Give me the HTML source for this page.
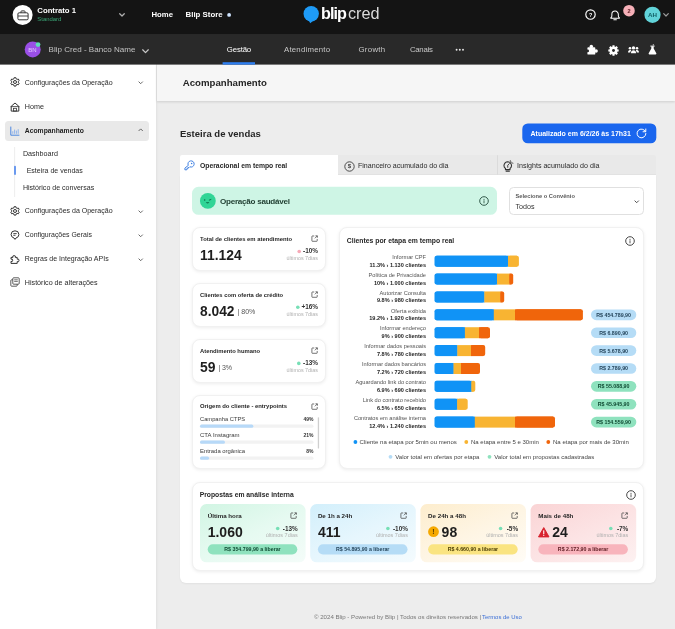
<!DOCTYPE html>
<html lang="pt-BR"><head><meta charset="utf-8"><title>Blip Cred - Esteira de vendas</title>
<style>
*{box-sizing:border-box;margin:0;padding:0}
html,body{width:675px;height:629px;overflow:hidden;background:#ededed}
body{font-family:"Liberation Sans",sans-serif;-webkit-font-smoothing:antialiased}
#root{will-change:transform;position:relative;width:675px;height:629px;overflow:hidden;background:#ededed}
.b{position:absolute}
.t{position:absolute;white-space:nowrap;line-height:1}
svg{position:absolute;overflow:visible}

</style></head>
<body>
<div id="root">
<div class="b" style="left:0px;top:0px;width:675px;height:34px;background:#141414"></div>
<div class="b" style="left:0px;top:34px;width:675px;height:30px;background:#292929"></div>
<div class="b" style="left:0px;top:64px;width:156.2px;height:565px;background:#fff;box-shadow:1px 0 2px rgba(0,0,0,.055)"></div>
<div class="b" style="left:4.5px;top:121px;width:144.5px;height:19.5px;background:#e9e9e9;border-radius:3.500px"></div>
<div class="b" style="left:157px;top:64px;width:518px;height:36.5px;background:#f6f6f6;box-shadow:0 1px 2.5px rgba(0,0,0,.13)"></div>
<div class="b" style="left:180px;top:155px;width:476px;height:20px;background:#e9e9e9;border-radius:2px 2px 0 0;border-bottom:0.8px solid #e2e2e2"></div>
<div class="b" style="left:180px;top:155.4px;width:157.7px;height:20px;background:#fff;border-radius:2px 0 0 0"></div>
<div class="b" style="left:180px;top:174.5px;width:476px;height:408.5px;background:#fff;border-radius:0 0 6px 6px;box-shadow:0 1px 2px rgba(0,0,0,.05)"></div>
<div class="b" style="left:509.2px;top:187.2px;width:135px;height:27.4px;background:#fff;border:0.8px solid #e0e0e0;border-radius:4.5px"></div>
<div class="b" style="left:192px;top:227px;width:134px;height:43.5px;background:#fff;border:0.8px solid #f1f1f1;border-radius:8px;box-shadow:0 1px 3.5px rgba(0,0,0,.075)"></div>
<div class="b" style="left:192px;top:283px;width:134px;height:43.5px;background:#fff;border:0.8px solid #f1f1f1;border-radius:8px;box-shadow:0 1px 3.5px rgba(0,0,0,.075)"></div>
<div class="b" style="left:192px;top:339px;width:134px;height:43.5px;background:#fff;border:0.8px solid #f1f1f1;border-radius:8px;box-shadow:0 1px 3.5px rgba(0,0,0,.075)"></div>
<div class="b" style="left:192px;top:394.5px;width:134px;height:74.5px;background:#fff;border:0.8px solid #f1f1f1;border-radius:8px;box-shadow:0 1px 3.5px rgba(0,0,0,.075)"></div>
<div class="b" style="left:339px;top:227px;width:304.5px;height:242px;background:#fff;border:0.8px solid #f1f1f1;border-radius:8px;box-shadow:0 1px 3.5px rgba(0,0,0,.075)"></div>
<div class="b" style="left:192px;top:481.5px;width:451.5px;height:89px;background:#fff;border:0.8px solid #f1f1f1;border-radius:8px;box-shadow:0 1px 3.5px rgba(0,0,0,.075)"></div>
<svg style="left:0;top:0" width="675" height="629" viewBox="0 0 675 629">
<rect x="0" y="34.2" width="675" height="30.4" fill="#292929"/>
<circle cx="22.6" cy="14.9" r="10" fill="#fff"/>
<circle cx="229.1" cy="14.9" r="1.9" fill="#cfe4ff"/>
<circle cx="629" cy="10.7" r="5.8" fill="#f6b0b8"/>
<circle cx="652.5" cy="14.8" r="8.1" fill="#61d3d9"/>
<circle cx="32.7" cy="49.4" r="8" fill="#9a4fe6"/>
<circle cx="38" cy="44.6" r="2.4" fill="#5fdcb8"/>
<rect x="222.6" y="62.2" width="32.4" height="2.4" fill="#2d7ef0"/>
<circle cx="456.6" cy="49.8" r="0.95" fill="#e8e8e8"/>
<circle cx="459.8" cy="49.8" r="0.95" fill="#e8e8e8"/>
<circle cx="463" cy="49.8" r="0.95" fill="#e8e8e8"/>
<rect x="14.3" y="147" width="0.8" height="50" fill="#e9e9e9"/>
<rect x="14.1" y="165.8" width="1.8" height="9.2" rx="0.9" fill="#5b8fee"/>
<rect x="522.3" y="123.5" width="134" height="19.8" rx="5.5" fill="#1a66ee"/>
<rect x="497" y="155.2" width="0.8" height="19.3" fill="#d8d8d8"/>
<rect x="192" y="186.8" width="305" height="28" rx="6.5" fill="#cef5e5"/>
<circle cx="207.85" cy="200.9" r="7.9" fill="#31d596"/>
<circle cx="299.2" cy="251.5" r="1.8" fill="#f7a9b7"/>
<circle cx="297.8" cy="307.2" r="1.8" fill="#77dfb6"/>
<circle cx="298.8" cy="363.4" r="1.8" fill="#77dfb6"/>
<rect x="200" y="424.5" width="113.5" height="3.3" rx="1.65" fill="#f2f2f2"/>
<rect x="200" y="424.5" width="53.34" height="3.3" rx="1.65" fill="#b7d9f8"/>
<rect x="200" y="440.5" width="113.5" height="3.3" rx="1.65" fill="#f2f2f2"/>
<rect x="200" y="440.5" width="24.97" height="3.3" rx="1.65" fill="#b7d9f8"/>
<rect x="200" y="456.5" width="113.5" height="3.3" rx="1.65" fill="#f2f2f2"/>
<rect x="200" y="456.5" width="9.08" height="3.3" rx="1.65" fill="#b7d9f8"/>
<rect x="317.8" y="417.2" width="1.3" height="31.4" rx="0.65" fill="#cfcfcf"/>
<rect x="434.5" y="255.7" width="73.5" height="11" rx="2" fill="#1093f6"/>
<rect x="436.5" y="255.7" width="71.8" height="11" fill="#1093f6"/>
<rect x="508" y="255.7" width="10.9" height="11" rx="2" fill="#f8b432"/>
<rect x="508" y="255.7" width="8.9" height="11" fill="#f8b432"/>
<rect x="434.5" y="273.58" width="62.5" height="11" rx="2" fill="#1093f6"/>
<rect x="436.5" y="273.58" width="60.8" height="11" fill="#1093f6"/>
<rect x="497" y="273.58" width="12.7" height="11" fill="#f8b432"/>
<rect x="509.4" y="273.58" width="3.8" height="11" rx="2" fill="#f0650b"/>
<rect x="509.4" y="273.58" width="1.8" height="11" fill="#f0650b"/>
<rect x="434.5" y="291.46" width="49.8" height="11" rx="2" fill="#1093f6"/>
<rect x="436.5" y="291.46" width="48.1" height="11" fill="#1093f6"/>
<rect x="484.3" y="291.46" width="16.4" height="11" fill="#f8b432"/>
<rect x="500.4" y="291.46" width="3.8" height="11" rx="2" fill="#f0650b"/>
<rect x="500.4" y="291.46" width="1.8" height="11" fill="#f0650b"/>
<rect x="434.5" y="309.34" width="59.3" height="11" rx="2" fill="#1093f6"/>
<rect x="436.5" y="309.34" width="57.6" height="11" fill="#1093f6"/>
<rect x="493.8" y="309.34" width="21.5" height="11" fill="#f8b432"/>
<rect x="515" y="309.34" width="67.9" height="11" rx="2" fill="#f0650b"/>
<rect x="515" y="309.34" width="65.9" height="11" fill="#f0650b"/>
<rect x="591" y="309.54" width="45.3" height="10.6" rx="5.3" fill="#b5dcf6"/>
<rect x="434.5" y="327.22" width="30.4" height="11" rx="2" fill="#1093f6"/>
<rect x="436.5" y="327.22" width="28.7" height="11" fill="#1093f6"/>
<rect x="464.9" y="327.22" width="14.4" height="11" fill="#f8b432"/>
<rect x="479" y="327.22" width="11" height="11" rx="2" fill="#f0650b"/>
<rect x="479" y="327.22" width="9" height="11" fill="#f0650b"/>
<rect x="591" y="327.42" width="45.3" height="10.6" rx="5.3" fill="#b5dcf6"/>
<rect x="434.5" y="345.1" width="22.8" height="11" rx="2" fill="#1093f6"/>
<rect x="436.5" y="345.1" width="21.1" height="11" fill="#1093f6"/>
<rect x="457.3" y="345.1" width="14" height="11" fill="#f8b432"/>
<rect x="471" y="345.1" width="14.2" height="11" rx="2" fill="#f0650b"/>
<rect x="471" y="345.1" width="12.2" height="11" fill="#f0650b"/>
<rect x="591" y="345.3" width="45.3" height="10.6" rx="5.3" fill="#b5dcf6"/>
<rect x="434.5" y="362.98" width="19" height="11" rx="2" fill="#1093f6"/>
<rect x="436.5" y="362.98" width="17.3" height="11" fill="#1093f6"/>
<rect x="453.5" y="362.98" width="7.8" height="11" fill="#f8b432"/>
<rect x="461" y="362.98" width="19" height="11" rx="2" fill="#f0650b"/>
<rect x="461" y="362.98" width="17" height="11" fill="#f0650b"/>
<rect x="591" y="363.18" width="45.3" height="10.6" rx="5.3" fill="#b5dcf6"/>
<rect x="434.5" y="380.86" width="37" height="11" rx="2" fill="#1093f6"/>
<rect x="436.5" y="380.86" width="35.3" height="11" fill="#1093f6"/>
<rect x="471.5" y="380.86" width="3.8" height="11" rx="2" fill="#f8b432"/>
<rect x="471.5" y="380.86" width="1.8" height="11" fill="#f8b432"/>
<rect x="591" y="381.06" width="45.3" height="10.6" rx="5.3" fill="#8fe2be"/>
<rect x="434.5" y="398.74" width="22.8" height="11" rx="2" fill="#1093f6"/>
<rect x="436.5" y="398.74" width="21.1" height="11" fill="#1093f6"/>
<rect x="457.3" y="398.74" width="10.4" height="11" rx="2" fill="#f8b432"/>
<rect x="457.3" y="398.74" width="8.4" height="11" fill="#f8b432"/>
<rect x="591" y="398.94" width="45.3" height="10.6" rx="5.3" fill="#8fe2be"/>
<rect x="434.5" y="416.62" width="40.3" height="11" rx="2" fill="#1093f6"/>
<rect x="436.5" y="416.62" width="38.6" height="11" fill="#1093f6"/>
<rect x="474.8" y="416.62" width="40.5" height="11" fill="#f8b432"/>
<rect x="515" y="416.62" width="40" height="11" rx="2" fill="#f0650b"/>
<rect x="515" y="416.62" width="38" height="11" fill="#f0650b"/>
<rect x="591" y="416.82" width="45.3" height="10.6" rx="5.3" fill="#8fe2be"/>
<circle cx="355.4" cy="442" r="1.9" fill="#1093f6"/>
<circle cx="466.3" cy="442" r="1.9" fill="#f8b432"/>
<circle cx="548.3" cy="442" r="1.9" fill="#f0650b"/>
<circle cx="390.5" cy="456.8" r="1.9" fill="#b5dcf6"/>
<circle cx="489.5" cy="456.8" r="1.9" fill="#8fe2be"/>
<defs><linearGradient id="sg0" gradientUnits="userSpaceOnUse" x1="232" y1="489" x2="273.5" y2="577.5"><stop offset="0" stop-color="#d1f5e3"/><stop offset=".5" stop-color="#e6faf1"/><stop offset="1" stop-color="#f4fcf9"/></linearGradient></defs>
<rect x="200" y="504" width="105.6" height="58.3" rx="6.5" fill="url(#sg0)"/>
<circle cx="277.7" cy="528.5" r="1.8" fill="#77dfb6"/>
<rect x="207.7" y="544.2" width="89.6" height="10.2" rx="5.1" fill="#8fe2be"/>
<defs><linearGradient id="sg1" gradientUnits="userSpaceOnUse" x1="342.2" y1="489" x2="383.7" y2="577.5"><stop offset="0" stop-color="#d2effb"/><stop offset=".5" stop-color="#e6f6fd"/><stop offset="1" stop-color="#f4fbfe"/></linearGradient></defs>
<rect x="310.2" y="504" width="105.6" height="58.3" rx="6.5" fill="url(#sg1)"/>
<circle cx="387.9" cy="528.5" r="1.8" fill="#77dfb6"/>
<rect x="317.9" y="544.2" width="89.6" height="10.2" rx="5.1" fill="#b5dcf6"/>
<defs><linearGradient id="sg2" gradientUnits="userSpaceOnUse" x1="452.4" y1="489" x2="493.9" y2="577.5"><stop offset="0" stop-color="#fdedcd"/><stop offset=".5" stop-color="#fef5e4"/><stop offset="1" stop-color="#fffcf6"/></linearGradient></defs>
<rect x="420.4" y="504" width="105.6" height="58.3" rx="6.5" fill="url(#sg2)"/>
<circle cx="433.5" cy="531.7" r="5.4" fill="#f5a800"/>
<circle cx="500.6" cy="528.5" r="1.8" fill="#77dfb6"/>
<rect x="428.1" y="544.2" width="89.6" height="10.2" rx="5.1" fill="#fae481"/>
<defs><linearGradient id="sg3" gradientUnits="userSpaceOnUse" x1="562.6" y1="489" x2="604.1" y2="577.5"><stop offset="0" stop-color="#fad4d5"/><stop offset=".5" stop-color="#fce3e4"/><stop offset="1" stop-color="#fdf1f1"/></linearGradient></defs>
<rect x="530.6" y="504" width="105.6" height="58.3" rx="6.5" fill="url(#sg3)"/>
<circle cx="610.8" cy="528.5" r="1.8" fill="#77dfb6"/>
<rect x="538.3" y="544.2" width="89.6" height="10.2" rx="5.1" fill="#f8b4bc"/>
</svg>
<svg style="left:16.5px;top:9.5px" width="12" height="11" viewBox="0 0 12 11"><rect x="0.9" y="2.8" width="10.2" height="7" rx="1.2" fill="none" stroke="#333" stroke-width="1"/><path d="M4 2.8V1.6a.7.7 0 0 1 .7-.7h2.6a.7.7 0 0 1 .7.7v1.2" fill="none" stroke="#333" stroke-width="1"/><path d="M1 6h10" stroke="#333" stroke-width="0.9"/></svg>
<div class="t" style="left:37.3px;top:7.00px;font-size:7.75px;font-weight:700;color:#fff;">Contrato 1</div>
<div class="t" style="left:37.3px;top:17.00px;font-size:5.91px;color:#3aa676;">Standard</div>
<svg style="left:119.4px;top:13.4px" width="6" height="4" viewBox="0 0 6 4"><path d="M.7.7 3 3 5.300.7" fill="none" stroke="#b0b0b0" stroke-width="1.250" stroke-linecap="round" stroke-linejoin="round"/></svg>
<div class="t" style="left:151.5px;top:11.00px;font-size:7.74px;font-weight:700;color:#fff;">Home</div>
<div class="t" style="left:185.6px;top:11.00px;font-size:7.84px;font-weight:700;color:#fff;">Blip Store</div>
<svg style="left:303.1px;top:6.2px" width="17" height="18" viewBox="0 0 17 18"><circle cx="8.2" cy="7.8" r="7.7" fill="#1e9bf7"/><path d="M5.2 13.5 7.2 17.2 10.5 14.4Z" fill="#1e9bf7"/></svg>
<div class="t" style="left:321px;top:5.00px;font-size:16.2px;font-weight:700;color:#fff;letter-spacing:-0.95px;">blip</div>
<div class="t" style="left:348px;top:5.00px;font-size:16.24px;color:#dadada;">cred</div>
<svg style="left:585px;top:9.3px" width="11" height="11" viewBox="0 0 11 11"><circle cx="5.5" cy="5.5" r="4.700" fill="none" stroke="#fff" stroke-width="1.150"/></svg>
<div class="t" style="left:590.6px;transform:translateX(-50%);top:13.00px;font-size:5.4px;font-weight:700;color:#fff;">?</div>
<svg style="left:609.6px;top:9.7px" width="10.2" height="11.1" viewBox="0 0 11 12"><path d="M.9 8.900V8.300c.8-.5 1.100-1.200 1.100-2.100V4.700a3.500 3.500 0 0 1 7 0v1.500c0 .9.300 1.600 1.100 2.100v.6Z" fill="none" stroke="#fff" stroke-width="1.100" stroke-linejoin="round"/><path d="M4.100 10.600h2.800" stroke="#fff" stroke-width="1.100" stroke-linecap="round"/></svg>
<div class="t" style="left:629px;transform:translateX(-50%);top:9.00px;font-size:5.6px;font-weight:700;color:#5a1a20;">2</div>
<div class="t" style="left:652.5px;transform:translateX(-50%);top:12.00px;font-size:6.2px;font-weight:700;color:#0f5d63;">AH</div>
<svg style="left:662.7px;top:13.4px" width="6" height="4" viewBox="0 0 6 4"><path d="M.7.7 3 3 5.300.7" fill="none" stroke="#9c9c9c" stroke-width="1.200" stroke-linecap="round" stroke-linejoin="round"/></svg>
<div class="t" style="left:32.5px;transform:translateX(-50%);top:47.00px;font-size:6px;color:#e0c4ff;">BN</div>
<div class="t" style="left:48.6px;top:46.00px;font-size:8.05px;color:#c2c2c2;">Blip Cred - Banco Name</div>
<svg style="left:142.2px;top:48.6px" width="7" height="5" viewBox="0 0 7 5"><path d="M.7.8 3.500 3.600 6.300.8" fill="none" stroke="#c8c8c8" stroke-width="1.250" stroke-linecap="round" stroke-linejoin="round"/></svg>
<div class="t" style="left:226.8px;top:46.00px;font-size:7.8px;color:#fff;letter-spacing:-0.148px;">Gestão</div>
<div class="t" style="left:284px;top:46.00px;font-size:7.8px;color:#c8c8c8;letter-spacing:0.222px;">Atendimento</div>
<div class="t" style="left:358.4px;top:46.00px;font-size:7.8px;color:#c8c8c8;letter-spacing:0.332px;">Growth</div>
<div class="t" style="left:410px;top:46.00px;font-size:7.8px;color:#c8c8c8;letter-spacing:-0.296px;">Canais</div>
<svg style="left:587.3px;top:44.4px" width="11.5" height="11" viewBox="0 0 11.5 11"><rect x="0.400" y="3.200" width="7.900" height="7.400" rx="0.900" fill="#fff"/><circle cx="4.300" cy="2.500" r="1.750" fill="#fff"/><circle cx="9.100" cy="6.900" r="1.750" fill="#fff"/><circle cx="0.700" cy="6.900" r="1.350" fill="#292929"/></svg>
<svg style="left:607.6px;top:44.9px" width="11" height="11" viewBox="0 0 11 11"><g stroke="#fff" stroke-width="2.100"><path d="M5.500.300v10.400M.300 5.500h10.400M1.820 1.820l7.360 7.360M1.820 9.180l7.360-7.360"/></g><circle cx="5.500" cy="5.500" r="4.100" fill="#fff"/><circle cx="5.500" cy="5.500" r="1.450" fill="#292929"/></svg>
<svg style="left:627.5px;top:46.3px" width="11" height="8" viewBox="0 0 11 8"><circle cx="5.5" cy="1.9" r="1.7" fill="#fff"/><circle cx="2" cy="2.3" r="1.3" fill="#fff"/><circle cx="9" cy="2.3" r="1.3" fill="#fff"/><path d="M2.9 7.2c0-2 1.1-3 2.6-3s2.6 1 2.6 3Z" fill="#fff"/><path d="M0 6.6c0-1.6.8-2.5 2-2.5.5 0 .9.1 1.200.4-.6.5-.9 1.200-1 2.100Z" fill="#fff"/><path d="M11 6.600c0-1.600-.8-2.500-2-2.500-.5 0-.9.100-1.200.4.600.5.900 1.200 1 2.100Z" fill="#fff"/></svg>
<svg style="left:648.3px;top:44.4px" width="9" height="11" viewBox="0 0 9 11"><path d="M3.300 2.300h2.400v2.300l2.600 4.600a.8.800 0 0 1-.7 1.200H1.400a.8.800 0 0 1-.7-1.200l2.600-4.600Z" fill="#fff"/><path d="M2.700 2.100h3.600" stroke="#fff" stroke-width="0.9" stroke-linecap="round"/><circle cx="5.3" cy="0.800" r="0.600" fill="#fff"/></svg>
<svg style="left:9.5px;top:77px" width="10" height="10" viewBox="0 0 10 10"><path d="M4.100.700h1.800l.3 1.200.9.500 1.200-.4.900 1.600-.9.800v1l.9.800-.9 1.600-1.200-.4-.9.500-.3 1.200H4.100l-.3-1.200-.9-.5-1.200.4-.9-1.600.9-.8v-1l-.9-.8.900-1.600 1.200.4.900-.5Z" fill="none" stroke="#333" stroke-width="1" stroke-linejoin="round"/><circle cx="5" cy="5" r="1.500" fill="none" stroke="#333" stroke-width="1"/></svg>
<div class="t" style="left:24.8px;top:79.00px;font-size:7.02px;color:#2a2a2a;">Configurações da Operação</div>
<svg style="left:138.2px;top:80.7px" width="5.4" height="3.6" viewBox="0 0 5.4 3.600"><path d="M.9.9 2.700 2.700 4.500.9" fill="none" stroke="#5c5c5c" stroke-width="0.950" stroke-linecap="round" stroke-linejoin="round"/></svg>
<svg style="left:9.500px;top:101.500px" width="10" height="10" viewBox="0 0 10 10"><path d="M1.200 4.300 5 1l3.800 3.300V9.100H1.200Z" fill="none" stroke="#333" stroke-width="1" stroke-linejoin="round"/><path d="M.6 4.600h8.800" stroke="#333" stroke-width="0.800"/><rect x="3.500" y="6.300" width="3" height="2.800" fill="none" stroke="#333" stroke-width="0.800"/></svg>
<div class="t" style="left:24.8px;top:104.00px;font-size:7.16px;color:#2a2a2a;">Home</div>
<svg style="left:9.500px;top:125.500px" width="10" height="10" viewBox="0 0 10 10"><path d="M.8.600v8.600h8.600" fill="none" stroke="#3b7de0" stroke-width="0.900"/><path d="M2.800 7.800V5.200M4.600 7.800V3.600M6.400 7.800V4.600M8.200 7.800V3.200" stroke="#7aa6ea" stroke-width="0.800"/></svg>
<div class="t" style="left:24.8px;top:128.00px;font-size:6.79px;font-weight:700;color:#1e1e1e;">Acompanhamento</div>
<svg style="left:138.2px;top:128.3px" width="5.4" height="3.6" viewBox="0 0 5.4 3.600"><path d="M.9 2.700 2.700.9 4.500 2.700" fill="none" stroke="#5c5c5c" stroke-width="0.950" stroke-linecap="round" stroke-linejoin="round"/></svg>
<div class="t" style="left:22.9px;top:151.00px;font-size:7.17px;color:#2a2a2a;">Dashboard</div>
<div class="t" style="left:26.7px;top:167.00px;font-size:7.01px;color:#2a2a2a;">Esteira de vendas</div>
<div class="t" style="left:22.9px;top:184.00px;font-size:7.06px;color:#2a2a2a;">Histórico de conversas</div>
<svg style="left:9.5px;top:205.8px" width="10" height="10" viewBox="0 0 10 10"><path d="M4.100.700h1.800l.3 1.200.9.500 1.200-.4.900 1.600-.9.800v1l.9.800-.9 1.600-1.200-.4-.9.500-.3 1.200H4.100l-.3-1.200-.9-.5-1.200.4-.9-1.600.9-.8v-1l-.9-.8.900-1.600 1.200.4.900-.5Z" fill="none" stroke="#333" stroke-width="1" stroke-linejoin="round"/><circle cx="5" cy="5" r="1.500" fill="none" stroke="#333" stroke-width="1"/></svg>
<div class="t" style="left:24.8px;top:207.00px;font-size:7.02px;color:#2a2a2a;">Configurações da Operação</div>
<svg style="left:138.2px;top:209.5px" width="5.4" height="3.6" viewBox="0 0 5.4 3.600"><path d="M.9.9 2.700 2.700 4.500.9" fill="none" stroke="#5c5c5c" stroke-width="0.950" stroke-linecap="round" stroke-linejoin="round"/></svg>
<svg style="left:9.500px;top:229.800px" width="10" height="10" viewBox="0 0 10 10"><path d="M5 .8a3.900 3.700 0 0 1 3.900 3.700 3.900 3.700 0 0 1-2.900 3.500L5 9.400 4 8a3.900 3.700 0 0 1-2.900-3.500A3.900 3.700 0 0 1 5 .8Z" fill="none" stroke="#333" stroke-width="1" stroke-linejoin="round"/><path d="M3.300 3.600h3.400M3.300 5.300h2.200" stroke="#333" stroke-width="0.900"/></svg>
<div class="t" style="left:24.8px;top:232.00px;font-size:6.95px;color:#2a2a2a;">Configurações Gerais</div>
<svg style="left:138.2px;top:233.5px" width="5.4" height="3.6" viewBox="0 0 5.4 3.600"><path d="M.9.9 2.700 2.700 4.500.9" fill="none" stroke="#5c5c5c" stroke-width="0.950" stroke-linecap="round" stroke-linejoin="round"/></svg>
<svg style="left:9.500px;top:253.800px" width="10" height="10" viewBox="0 0 10 10"><path d="M1 3.400h1.900a1.300 1.300 0 1 1 2.400 0H7.200v1.800a1.300 1.300 0 1 1 0 2.400V9.400H1V7.400a1.200 1.200 0 1 0 0-2.200Z" fill="none" stroke="#333" stroke-width="1" stroke-linejoin="round"/></svg>
<div class="t" style="left:24.8px;top:255.00px;font-size:7.03px;color:#2a2a2a;">Regras de Integração APIs</div>
<svg style="left:138.2px;top:257.6px" width="5.4" height="3.6" viewBox="0 0 5.4 3.600"><path d="M.9.9 2.700 2.700 4.500.9" fill="none" stroke="#5c5c5c" stroke-width="0.950" stroke-linecap="round" stroke-linejoin="round"/></svg>
<svg style="left:9.500px;top:277px" width="10" height="10" viewBox="0 0 10 10"><rect x="2.800" y="0.800" width="6.400" height="6.400" rx="0.800" fill="none" stroke="#333" stroke-width="0.800"/><path d="M2.800 2.800H1.600a.8.800 0 0 0-.8.800V8.400a.8.800 0 0 0 .8.800H6.400a.8.800 0 0 0 .8-.8V7.200" fill="none" stroke="#333" stroke-width="0.800"/><path d="M4.200 2.800h3.600M4.200 4.400h3.600" stroke="#333" stroke-width="0.700"/></svg>
<div class="t" style="left:24.8px;top:280.00px;font-size:7.17px;color:#2a2a2a;">Histórico de alterações</div>
<div class="t" style="left:182.8px;top:78.00px;font-size:9.63px;font-weight:700;color:#262626;">Acompanhamento</div>
<div class="t" style="left:180px;top:129.00px;font-size:9.51px;font-weight:700;color:#262626;">Esteira de vendas</div>
<div class="t" style="left:530.5px;top:130.00px;font-size:7.01px;font-weight:700;color:#fff;">Atualizado em 6/2/26 às 17h31</div>
<svg style="left:636.3px;top:127.9px" width="11" height="11" viewBox="0 0 10 10"><path d="M8.600 3.200A4 4 0 1 0 9 5" fill="none" stroke="#fff" stroke-width="0.900" stroke-linecap="round"/><path d="M8.900.900v2.500H6.400" fill="none" stroke="#fff" stroke-width="0.900" stroke-linecap="round" stroke-linejoin="round"/></svg>
<svg style="left:184.3px;top:160.3px" width="11" height="11" viewBox="0 0 11 11"><path d="M4.300 5.400A3.100 3.100 0 1 1 5.800 6.800L5 7.600H3.900V8.700H2.800V9.800H.9V8.100Z" fill="none" stroke="#3b7de0" stroke-width="0.950" stroke-linejoin="round"/><circle cx="7.600" cy="3.500" r=".75" fill="#3b7de0"/></svg>
<div class="t" style="left:200px;top:163.00px;font-size:6.81px;font-weight:700;color:#262626;">Operacional em tempo real</div>
<svg style="left:343.8px;top:160.5px" width="11" height="11" viewBox="0 0 11 11"><circle cx="5.500" cy="5.500" r="4.700" fill="none" stroke="#3a3a3a" stroke-width="0.900"/></svg>
<div class="t" style="left:349.3px;transform:translateX(-50%);top:163.00px;font-size:6px;font-weight:700;color:#3a3a3a;">$</div>
<div class="t" style="left:358px;top:162.00px;font-size:7.06px;color:#2a2a2a;">Financeiro acumulado do dia</div>
<svg style="left:501.8px;top:159.6px" width="11.5" height="12.5" viewBox="0 0 10 11"><path d="M5 1.600a3.300 3.300 0 0 0-2 5.900v1h4v-1a3.300 3.300 0 0 0-2-5.900Z" fill="none" stroke="#333" stroke-width="0.950"/><path d="M3.600 9.800h2.800" stroke="#333" stroke-width="0.950" stroke-linecap="round"/><path d="M5 6.800V4.600l1.700-1.700" fill="none" stroke="#333" stroke-width="0.800"/><path d="M7.300.500 7.800 1.700M8.500 2.500l1.100.3" stroke="#333" stroke-width="0.700" stroke-linecap="round"/></svg>
<div class="t" style="left:517px;top:163.00px;font-size:7.1px;color:#2a2a2a;">Insights acumulado do dia</div>
<svg style="left:200.3px;top:193.4px" width="15" height="15" viewBox="0 0 15 15"><circle cx="4.700" cy="6.900" r=".75" fill="#0b6a45"/><path d="M9.300 7.100 10.900 6.500" stroke="#0b6a45" stroke-width="0.900" stroke-linecap="round"/><path d="M5.800 9.300a1.900 1.700 0 0 0 3.600 0Z" fill="#0b6a45"/></svg>
<div class="t" style="left:220px;top:198.00px;font-size:8.1px;font-weight:700;color:#1f3d30;letter-spacing:-0.265px;">Operação saudável</div>
<svg style="left:478.6px;top:196.1px" width="10" height="10" viewBox="0 0 10 10"><circle cx="5" cy="5" r="4.3" fill="none" stroke="#23493b" stroke-width="0.900"/><path d="M5 4.700v2.200" stroke="#23493b" stroke-width="0.800" stroke-linecap="round"/><circle cx="5" cy="3.200" r=".55" fill="#23493b"/></svg>
<div class="t" style="left:515.5px;top:194.00px;font-size:5.73px;font-weight:700;color:#5a5a5a;">Selecione o Convênio</div>
<div class="t" style="left:515.5px;top:204.00px;font-size:7.12px;color:#333;">Todos</div>
<svg style="left:633.9px;top:199.8px" width="5.4" height="3.6" viewBox="0 0 5.4 3.600"><path d="M.9.9 2.700 2.700 4.500.9" fill="none" stroke="#444" stroke-width="0.950" stroke-linecap="round" stroke-linejoin="round"/></svg>
<div class="t" style="left:200px;top:237.00px;font-size:5.87px;font-weight:700;color:#262626;">Total de clientes em atendimento</div>
<svg style="left:311.2px;top:235.4px" width="7.200" height="7.200" viewBox="0 0 8 8"><path d="M3.600 1.100H1.500a.5.500 0 0 0-.5.500V6.500a.5.500 0 0 0 .5.500H6.400a.5.500 0 0 0 .5-.5V4.400" fill="none" stroke="#484848" stroke-width="0.850"/><path d="M5 .9H7.100V3M7 1 4.300 3.700" fill="none" stroke="#484848" stroke-width="0.850"/></svg>
<div class="t" style="left:200px;top:249.00px;font-size:13.88px;font-weight:700;color:#1e1e1e;">11.124</div>
<div class="t" style="right:357.00px;top:248.00px;font-size:6.4px;font-weight:700;color:#333;">-10%</div>
<div class="t" style="right:357.00px;top:256.00px;font-size:5.4px;color:#b0b0b0;">últimos 7dias</div>
<div class="t" style="left:200px;top:293.00px;font-size:5.8px;font-weight:700;color:#262626;">Clientes com oferta de crédito</div>
<svg style="left:311.2px;top:291.4px" width="7.200" height="7.200" viewBox="0 0 8 8"><path d="M3.600 1.100H1.500a.5.500 0 0 0-.5.500V6.500a.5.500 0 0 0 .5.500H6.400a.5.500 0 0 0 .5-.5V4.400" fill="none" stroke="#484848" stroke-width="0.850"/><path d="M5 .9H7.100V3M7 1 4.300 3.700" fill="none" stroke="#484848" stroke-width="0.850"/></svg>
<div class="t" style="left:200px;top:305.00px;font-size:13.78px;font-weight:700;color:#1e1e1e;">8.042</div>
<div class="t" style="left:237.5px;top:308.00px;font-size:7.05px;color:#555;letter-spacing:-0.021px;">| 80%</div>
<div class="t" style="right:357.00px;top:304.00px;font-size:6.4px;font-weight:700;color:#333;">+16%</div>
<div class="t" style="right:357.00px;top:312.00px;font-size:5.4px;color:#b0b0b0;">últimos 7dias</div>
<div class="t" style="left:200px;top:349.00px;font-size:5.85px;font-weight:700;color:#262626;">Atendimento humano</div>
<svg style="left:311.2px;top:347.4px" width="7.200" height="7.200" viewBox="0 0 8 8"><path d="M3.600 1.100H1.500a.5.500 0 0 0-.5.500V6.500a.5.500 0 0 0 .5.500H6.400a.5.500 0 0 0 .5-.5V4.400" fill="none" stroke="#484848" stroke-width="0.850"/><path d="M5 .9H7.100V3M7 1 4.300 3.700" fill="none" stroke="#484848" stroke-width="0.850"/></svg>
<div class="t" style="left:200px;top:361.00px;font-size:13.92px;font-weight:700;color:#1e1e1e;">59</div>
<div class="t" style="left:218.5px;top:364.00px;font-size:7.05px;color:#555;letter-spacing:-0.158px;">| 3%</div>
<div class="t" style="right:357.00px;top:360.00px;font-size:6.4px;font-weight:700;color:#333;">-13%</div>
<div class="t" style="right:357.00px;top:368.00px;font-size:5.4px;color:#b0b0b0;">últimos 7dias</div>
<div class="t" style="left:200px;top:404.00px;font-size:5.9px;font-weight:700;color:#262626;">Origem do cliente - entrypoints</div>
<svg style="left:311.2px;top:403px" width="7.200" height="7.200" viewBox="0 0 8 8"><path d="M3.600 1.100H1.500a.5.500 0 0 0-.5.500V6.500a.5.500 0 0 0 .5.500H6.400a.5.500 0 0 0 .5-.5V4.400" fill="none" stroke="#484848" stroke-width="0.850"/><path d="M5 .9H7.100V3M7 1 4.300 3.700" fill="none" stroke="#484848" stroke-width="0.850"/></svg>
<div class="t" style="left:200px;top:417.00px;font-size:5.75px;color:#3a3a3a;">Campanha CTPS</div>
<div class="t" style="right:361.50px;top:417.00px;font-size:5px;font-weight:700;color:#333;">49%</div>
<div class="t" style="left:200px;top:432.00px;font-size:6px;color:#3a3a3a;">CTA Instagram</div>
<div class="t" style="right:361.50px;top:433.00px;font-size:5px;font-weight:700;color:#333;">21%</div>
<div class="t" style="left:200px;top:449.00px;font-size:5.92px;color:#3a3a3a;">Entrada orgânica</div>
<div class="t" style="right:361.50px;top:449.00px;font-size:5px;font-weight:700;color:#333;">8%</div>
<div class="t" style="left:346.8px;top:238.00px;font-size:6.84px;font-weight:700;color:#262626;">Clientes por etapa em tempo real</div>
<svg style="left:624.8px;top:235.6px" width="10" height="10" viewBox="0 0 10 10"><circle cx="5" cy="5" r="4.3" fill="none" stroke="#333" stroke-width="0.900"/><path d="M5 4.700v2.200" stroke="#333" stroke-width="0.800" stroke-linecap="round"/><circle cx="5" cy="3.200" r=".55" fill="#333"/></svg>
<div class="t" style="right:249.00px;top:255.00px;font-size:5.65px;color:#555;">Informar CPF</div>
<div class="t" style="right:249.00px;top:263.00px;font-size:5.55px;font-weight:700;color:#262626;">11.3% › 1.130 clientes</div>
<div class="t" style="right:249.00px;top:273.00px;font-size:5.65px;color:#555;">Política de Privacidade</div>
<div class="t" style="right:249.00px;top:281.00px;font-size:5.55px;font-weight:700;color:#262626;">10% › 1.000 clientes</div>
<div class="t" style="right:249.00px;top:291.00px;font-size:5.65px;color:#555;">Autorizar Consulta</div>
<div class="t" style="right:249.00px;top:298.00px;font-size:5.55px;font-weight:700;color:#262626;">9.8% › 980 clientes</div>
<div class="t" style="right:249.00px;top:309.00px;font-size:5.65px;color:#555;">Oferta exibida</div>
<div class="t" style="right:249.00px;top:316.00px;font-size:5.55px;font-weight:700;color:#262626;">19.2% › 1.920 clientes</div>
<div class="t" style="left:613.6px;transform:translateX(-50%);top:313.00px;font-size:5.3px;font-weight:700;color:#1f3f55;">R$ 454.789,90</div>
<div class="t" style="right:249.00px;top:326.00px;font-size:5.65px;color:#555;">Informar endereço</div>
<div class="t" style="right:249.00px;top:334.00px;font-size:5.55px;font-weight:700;color:#262626;">9% › 900 clientes</div>
<div class="t" style="left:613.6px;transform:translateX(-50%);top:331.00px;font-size:5.3px;font-weight:700;color:#1f3f55;">R$ 6.890,90</div>
<div class="t" style="right:249.00px;top:344.00px;font-size:5.65px;color:#555;">Informar dados pessoais</div>
<div class="t" style="right:249.00px;top:352.00px;font-size:5.55px;font-weight:700;color:#262626;">7.8% › 780 clientes</div>
<div class="t" style="left:613.6px;transform:translateX(-50%);top:349.00px;font-size:5.3px;font-weight:700;color:#1f3f55;">R$ 5.678,90</div>
<div class="t" style="right:249.00px;top:362.00px;font-size:5.65px;color:#555;">Informar dados bancários</div>
<div class="t" style="right:249.00px;top:370.00px;font-size:5.55px;font-weight:700;color:#262626;">7.2% › 720 clientes</div>
<div class="t" style="left:613.6px;transform:translateX(-50%);top:366.00px;font-size:5.3px;font-weight:700;color:#1f3f55;">R$ 2.789,90</div>
<div class="t" style="right:249.00px;top:380.00px;font-size:5.65px;color:#555;">Aguardando link do contrato</div>
<div class="t" style="right:249.00px;top:388.00px;font-size:5.55px;font-weight:700;color:#262626;">6.9% › 690 clientes</div>
<div class="t" style="left:613.6px;transform:translateX(-50%);top:384.00px;font-size:5.3px;font-weight:700;color:#0f4a32;">R$ 55.088,90</div>
<div class="t" style="right:249.00px;top:398.00px;font-size:5.65px;color:#555;">Link do contrato recebido</div>
<div class="t" style="right:249.00px;top:406.00px;font-size:5.55px;font-weight:700;color:#262626;">6.5% › 650 clientes</div>
<div class="t" style="left:613.6px;transform:translateX(-50%);top:402.00px;font-size:5.3px;font-weight:700;color:#0f4a32;">R$ 45.945,90</div>
<div class="t" style="right:249.00px;top:416.00px;font-size:5.65px;color:#555;">Contratos em análise interna</div>
<div class="t" style="right:249.00px;top:424.00px;font-size:5.55px;font-weight:700;color:#262626;">12.4% › 1.240 clientes</div>
<div class="t" style="left:613.6px;transform:translateX(-50%);top:420.00px;font-size:5.3px;font-weight:700;color:#0f4a32;">R$ 154.559,90</div>
<div class="t" style="left:359.6px;top:439.00px;font-size:6.04px;color:#444;">Cliente na etapa por 5min ou menos</div>
<div class="t" style="left:471px;top:439.00px;font-size:6.02px;color:#444;">Na etapa entre 5 e 30min</div>
<div class="t" style="left:553px;top:439.00px;font-size:6.04px;color:#444;">Na etapa por mais de 30min</div>
<div class="t" style="left:395.2px;top:454.00px;font-size:6.06px;color:#444;">Valor total em ofertas por etapa</div>
<div class="t" style="left:494.2px;top:454.00px;font-size:6.07px;color:#444;">Valor total em propostas cadastradas</div>
<div class="t" style="left:199.7px;top:492.00px;font-size:6.77px;font-weight:700;color:#262626;">Propostas em análise interna</div>
<svg style="left:625.5px;top:489.5px" width="10" height="10" viewBox="0 0 10 10"><circle cx="5" cy="5" r="4.3" fill="none" stroke="#333" stroke-width="0.900"/><path d="M5 4.700v2.200" stroke="#333" stroke-width="0.800" stroke-linecap="round"/><circle cx="5" cy="3.200" r=".55" fill="#333"/></svg>
<div class="t" style="left:207.7px;top:513.00px;font-size:6.2px;font-weight:700;color:#262626;">Última hora</div>
<svg style="left:290.1px;top:512.4px" width="7.200" height="7.200" viewBox="0 0 8 8"><path d="M3.600 1.100H1.500a.5.500 0 0 0-.5.500V6.500a.5.500 0 0 0 .5.500H6.400a.5.500 0 0 0 .5-.5V4.400" fill="none" stroke="#484848" stroke-width="0.850"/><path d="M5 .9H7.100V3M7 1 4.300 3.700" fill="none" stroke="#484848" stroke-width="0.850"/></svg>
<div class="t" style="left:207.7px;top:525.00px;font-size:14px;font-weight:700;color:#1e1e1e;">1.060</div>
<div class="t" style="right:377.30px;top:526.00px;font-size:6.4px;font-weight:700;color:#333;">-13%</div>
<div class="t" style="right:377.30px;top:533.00px;font-size:5.48px;color:#b0b0b0;">últimos 7dias</div>
<div class="t" style="left:252.5px;transform:translateX(-50%);top:547.00px;font-size:5.25px;font-weight:700;color:#0f4a32;">R$ 354.799,90 a liberar</div>
<div class="t" style="left:317.9px;top:513.00px;font-size:6.2px;font-weight:700;color:#262626;">De 1h a 24h</div>
<svg style="left:400.3px;top:512.4px" width="7.200" height="7.200" viewBox="0 0 8 8"><path d="M3.600 1.100H1.500a.5.500 0 0 0-.5.500V6.500a.5.500 0 0 0 .5.500H6.400a.5.500 0 0 0 .5-.5V4.400" fill="none" stroke="#484848" stroke-width="0.850"/><path d="M5 .9H7.100V3M7 1 4.300 3.700" fill="none" stroke="#484848" stroke-width="0.850"/></svg>
<div class="t" style="left:317.9px;top:525.00px;font-size:14px;font-weight:700;color:#1e1e1e;">411</div>
<div class="t" style="right:267.10px;top:526.00px;font-size:6.4px;font-weight:700;color:#333;">-10%</div>
<div class="t" style="right:267.10px;top:533.00px;font-size:5.48px;color:#b0b0b0;">últimos 7dias</div>
<div class="t" style="left:362.7px;transform:translateX(-50%);top:547.00px;font-size:5.25px;font-weight:700;color:#1f3f55;">R$ 54.895,90 a liberar</div>
<div class="t" style="left:428.1px;top:513.00px;font-size:6.2px;font-weight:700;color:#262626;">De 24h a 48h</div>
<svg style="left:510.5px;top:512.4px" width="7.200" height="7.200" viewBox="0 0 8 8"><path d="M3.600 1.100H1.500a.5.500 0 0 0-.5.500V6.500a.5.500 0 0 0 .5.500H6.400a.5.500 0 0 0 .5-.5V4.400" fill="none" stroke="#484848" stroke-width="0.850"/><path d="M5 .9H7.100V3M7 1 4.300 3.700" fill="none" stroke="#484848" stroke-width="0.850"/></svg>
<div class="t" style="left:433.3px;transform:translateX(-50%);top:528.00px;font-size:7px;font-weight:700;color:#5a3d00;">!</div>
<div class="t" style="left:441.6px;top:525.00px;font-size:14px;font-weight:700;color:#1e1e1e;">98</div>
<div class="t" style="right:156.90px;top:526.00px;font-size:6.4px;font-weight:700;color:#333;">-5%</div>
<div class="t" style="right:156.90px;top:533.00px;font-size:5.48px;color:#b0b0b0;">últimos 7dias</div>
<div class="t" style="left:472.9px;transform:translateX(-50%);top:547.00px;font-size:5.25px;font-weight:700;color:#4a3d05;">R$ 4.660,90 a liberar</div>
<div class="t" style="left:538.3px;top:513.00px;font-size:6.2px;font-weight:700;color:#262626;">Mais de 48h</div>
<svg style="left:620.7px;top:512.4px" width="7.200" height="7.200" viewBox="0 0 8 8"><path d="M3.600 1.100H1.500a.5.500 0 0 0-.5.500V6.500a.5.500 0 0 0 .5.500H6.400a.5.500 0 0 0 .5-.5V4.400" fill="none" stroke="#484848" stroke-width="0.850"/><path d="M5 .9H7.100V3M7 1 4.300 3.700" fill="none" stroke="#484848" stroke-width="0.850"/></svg>
<svg style="left:538.0000000000001px;top:526.500px" width="11.500" height="10.500" viewBox="0 0 11.500 10.500"><path d="M5.750.600 11 9.900H.5Z" fill="#d8232f" stroke="#d8232f" stroke-width="1" stroke-linejoin="round"/><path d="M5.750 3.800v3" stroke="#fff" stroke-width="1.100" stroke-linecap="round"/><circle cx="5.750" cy="8.300" r=".65" fill="#fff"/></svg>
<div class="t" style="left:552.3px;top:525.00px;font-size:14px;font-weight:700;color:#1e1e1e;">24</div>
<div class="t" style="right:46.70px;top:526.00px;font-size:6.4px;font-weight:700;color:#333;">-7%</div>
<div class="t" style="right:46.70px;top:533.00px;font-size:5.48px;color:#b0b0b0;">últimos 7dias</div>
<div class="t" style="left:583.1px;transform:translateX(-50%);top:547.00px;font-size:5.25px;font-weight:700;color:#5a1a20;">R$ 2.172,90 a liberar</div>
<div class="t" style="left:314px;top:614.00px;font-size:6.12px;color:#777;">© 2024 Blip - Powered by Blip | Todos os direitos reservados |</div>
<div class="t" style="left:482px;top:615.00px;font-size:5.92px;color:#3b6fd6;">Termos de Uso</div>
</div>
</body></html>
